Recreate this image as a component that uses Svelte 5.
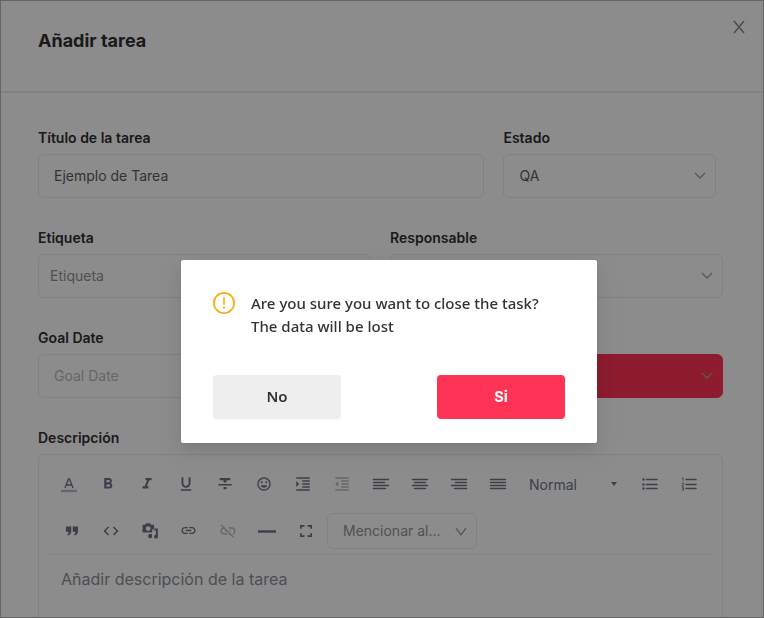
<script>
  const firstRow = [
    { name: 'Color de texto', kind: 'color' },
    { name: 'Negrita', d: 'M15.6 10.79c.97-.67 1.65-1.77 1.65-2.79 0-2.26-1.75-4-4-4H7v14h7.04c2.09 0 3.71-1.7 3.71-3.79 0-1.52-.86-2.82-2.15-3.42zM10 6.5h3c.83 0 1.5.67 1.5 1.5s-.67 1.5-1.5 1.5h-3v-3zm3.5 9H10v-3h3.5c.83 0 1.5.67 1.5 1.5s-.67 1.5-1.5 1.5z' },
    { name: 'Cursiva', d: 'M10 4v3h2.21l-3.42 8H6v3h8v-3h-2.21l3.42-8H18V4z' },
    { name: 'Subrayado', d: 'M12 17c3.31 0 6-2.69 6-6V3h-2.5v8c0 1.93-1.57 3.5-3.5 3.5S8.5 12.93 8.5 11V3H6v8c0 3.31 2.69 6 6 6zm-7 2v2h14v-2H5z' },
    { name: 'Tachado', d: 'M10 19h4v-3h-4v3zM5 4v3h5v3h4V7h5V4H5zM3 14h18v-2H3v2z' },
    { name: 'Emoji', size: 16, d: 'M11.99 2C6.47 2 2 6.48 2 12s4.47 10 9.99 10C17.52 22 22 17.52 22 12S17.52 2 11.99 2zM12 20c-4.42 0-8-3.58-8-8s3.58-8 8-8 8 3.58 8 8-3.58 8-8 8zm3.5-9c.83 0 1.5-.67 1.5-1.5S16.33 8 15.5 8 14 8.67 14 9.5s.67 1.5 1.5 1.5zm-7 0c.83 0 1.5-.67 1.5-1.5S9.33 8 8.5 8 7 8.67 7 9.5 7.67 11 8.5 11zm3.5 6.5c2.33 0 4.31-1.46 5.11-3.5H6.89c.8 2.04 2.78 3.5 5.11 3.5z' },
    { name: 'Aumentar sangría', d: 'M3 21h18v-2H3v2zM3 8v8l4-4-4-4zm8 9h10v-2H11v2zM3 3v2h18V3H3zm8 6h10V7H11v2zm0 4h10v-2H11v2z' },
    { name: 'Reducir sangría', off: true, d: 'M11 17h10v-2H11v2zm-8-5l4 4V8l-4 4zm0 9h18v-2H3v2zM3 3v2h18V3H3zm8 6h10V7H11v2zm0 4h10v-2H11v2z' },
    { name: 'Alinear a la izquierda', lines: 'M1.5 4.5h15M1.5 7.5h11M1.5 10.5h15M1.5 13.5h12' },
    { name: 'Centrar', lines: 'M1.5 4.5h15M3.5 7.5h11M1.5 10.5h15M3.5 13.5h11' },
    { name: 'Alinear a la derecha', lines: 'M1.5 4.5h15M5.5 7.5h11M1.5 10.5h15M4.5 13.5h12' },
    { name: 'Justificar', lines: 'M1.5 4.5h15M1.5 7.5h15M1.5 10.5h15M1.5 13.5h15' }
  ];
  const lists = [
    { name: 'Lista con viñetas', lines: 'M5.5 4.5h10.500M5.5 9.5h10.500M5.5 13.5h10.500', bullets: [4.5, 9.5, 13.5] },
    { name: 'Lista numerada', lines: 'M6 4.5h10M6 9.5h10M6 13.5h10', marks: 'M2 3.2l1-.4v3M1.8 8h1.6v1.4l-1.6 1.4h1.8M1.8 12.2h1.6v3H1.8M2.4 13.7h1' }
  ];
  const secondRow = [
    { name: 'Cita', d: 'M4 6h7v6c0 3-1.300 5.200-4 5.700H5.300c1.500-1.200 2-2.700 2-4.700H4zM13 6h7v6c0 3-1.300 5.200-4 5.700h-1.700c1.500-1.200 2-2.700 2-4.700H13z' },
    { name: 'Código', d: 'M9.4 16.6L4.8 12l4.6-4.6L8 6l-6 6 6 6 1.4-1.4zm5.2 0l4.6-4.6-4.6-4.6L16 6l6 6-6 6-1.4-1.4z' },
    { name: 'Multimedia', d: 'M5.500 3.500L7 1.500h5l1.500 2H16c1 0 1.500.6 1.500 1.500v4.500H15V14H3.500C2.600 14 2 13.400 2 12.500V5c0-.9.6-1.500 1.500-1.500zM9.500 5.500a3.200 3.200 0 1 0 0 6.400 3.200 3.200 0 0 0 0-6.400zM18 8.500h4.500v11a2.600 2.600 0 1 1-2.600-2.600V11.500H18zM9.500 18.600a2.600 2.600 0 0 1 2.600-2.600h2.600v3.500a2.600 2.600 0 0 1-5.200-.9z' },
    { name: 'Enlace', size: 17, d: 'M3.9 12c0-1.71 1.39-3.1 3.1-3.1h4V7H7c-2.760 0-5 2.240-5 5s2.240 5 5 5h4v-1.900H7c-1.710 0-3.100-1.390-3.100-3.100zM8 13h8v-2H8v2zm9-6h-4v1.900h4c1.710 0 3.100 1.390 3.100 3.100s-1.390 3.100-3.100 3.100h-4V17h4c2.760 0 5-2.240 5-5s-2.240-5-5-5z' },
    { name: 'Quitar enlace', off: true, d: 'M17 7h-4v1.900h4c1.710 0 3.100 1.390 3.100 3.100 0 1.430-.98 2.630-2.310 2.980l1.460 1.460C20.880 15.610 22 13.950 22 12c0-2.760-2.240-5-5-5zm-1 4h-2.190l2 2H16v-2zM2 4.270l3.110 3.110C3.290 8.120 2 9.910 2 12c0 2.760 2.240 5 5 5h4v-1.900H7c-1.710 0-3.100-1.390-3.100-3.100 0-1.590 1.210-2.900 2.760-3.070L8.730 11H8v2h2.730L13 15.270V17h1.730l4.010 4L20 19.740 3.270 3 2 4.270z' },
    { name: 'Línea horizontal', kind: 'rule' },
    { name: 'Pantalla completa', d: 'M6.300 15H4v5h6v-2.300H6.300zM4 9h2.300V6.300H10V4H4zm13.700 8.700H14V20h6v-5h-2.300zM14 4v2.300h3.700V9H20V4z' }
  ];
</script>

{#snippet chevron()}
  <svg class="chevron" width="12" height="8" viewBox="0 0 12 8" aria-hidden="true"><path d="M1 1l5 5 5-5" /></svg>
{/snippet}

{#snippet tool(t)}
  <button type="button" class="tool" class:off={t.off} disabled={t.off} aria-label={t.name}>
    {#if t.d}
      <svg width={t.size ?? 18} height={t.size ?? 18} viewBox="0 0 24 24"><path fill="currentColor" fill-rule="evenodd" d={t.d} /></svg>
    {:else if t.kind === 'color'}
      <svg width="18" height="18" viewBox="0 0 18 18">
        <path d="M5 13L8.500 4h1L13 13M6.300 10h5.400" fill="none" stroke="currentColor" stroke-width="1.300" />
        <path d="M1 16h16" stroke="#b8babe" stroke-width="2.400" />
      </svg>
    {:else if t.kind === 'rule'}
      <svg width="18" height="18" viewBox="0 0 18 18"><path d="M0 9.500h18" stroke="currentColor" stroke-width="2.400" /></svg>
    {:else}
      <svg width="18" height="18" viewBox="0 0 18 18">
        <path d={t.lines} fill="none" stroke="currentColor" stroke-width="1.500" stroke-linecap="round" />
        {#each t.bullets ?? [] as y}<circle cx="2.500" cy={y} r="1.200" fill="currentColor" />{/each}
        {#if t.marks}<path d={t.marks} fill="none" stroke="currentColor" stroke-width=".9" />{/if}
      </svg>
    {/if}
  </button>
{/snippet}

<div class="drawer">
  <header>
    <h1>Añadir tarea</h1>
    <button type="button" class="close" aria-label="Cerrar">
      <svg width="12" height="14" viewBox="0 0 12 14"><path d="M1 1l10 12M11 1L1 13" /></svg>
    </button>
  </header>

  <form>
    <div class="row top">
      <div class="field wide">
        <label for="titulo">Título de la tarea</label>
        <input id="titulo" class="control" value="Ejemplo de Tarea" />
      </div>
      <div class="field">
        <label for="estado">Estado</label>
        <div class="pick">
          <select id="estado" class="control"><option>QA</option></select>
          {@render chevron()}
        </div>
      </div>
    </div>
    <div class="row">
      <div class="field">
        <label for="etiqueta">Etiqueta</label>
        <input id="etiqueta" class="control tag" placeholder="Etiqueta" />
      </div>
      <div class="field">
        <label for="responsable">Responsable</label>
        <div class="pick">
          <select id="responsable" class="control"><option></option></select>
          {@render chevron()}
        </div>
      </div>
    </div>
    <div class="row">
      <div class="field">
        <label for="fecha">Goal Date</label>
        <input id="fecha" class="control" placeholder="Goal Date" />
      </div>
      <div class="field">
        <label for="prioridad">&nbsp;</label>
        <div class="pick">
          <select id="prioridad" class="control red" aria-label="Prioridad"><option></option></select>
          {@render chevron()}
        </div>
      </div>
    </div>

    <div class="field">
      <label for="descripcion">Descripción</label>
      <div class="editor">
        <div class="toolbar">
          <div class="tools">
            {#each firstRow as t}{@render tool(t)}{/each}
            <button type="button" class="format">
              Normal
              <svg width="6" height="4" viewBox="0 0 6 4"><path d="M0 0h6L3 4z" fill="currentColor" /></svg>
            </button>
            {#each lists as t}{@render tool(t)}{/each}
          </div>
          <div class="tools second">
            {#each secondRow as t}{@render tool(t)}{/each}
            <div class="pick mention">
              <select class="control" aria-label="Mencionar"><option>Mencionar al...</option></select>
              <svg class="chevron" width="12" height="9" viewBox="0 0 12 9" aria-hidden="true"><path d="M1 1l5 7 5-7" /></svg>
            </div>
          </div>
        </div>
        <textarea id="descripcion" placeholder="Añadir descripción de la tarea"></textarea>
      </div>
    </div>
  </form>
</div>

<div class="mask">
  <div class="dialog" role="alertdialog" aria-modal="true" aria-labelledby="question">
    <div class="message">
      <svg width="22" height="22" viewBox="0 0 22 22" aria-hidden="true">
        <circle cx="11" cy="11" r="10.100" fill="none" stroke="#faad14" stroke-width="1.800" />
        <path d="M11 5.300v7.500" stroke="#faad14" stroke-width="1.600" />
        <circle cx="11" cy="15.700" r="1.100" fill="#faad14" />
      </svg>
      <p id="question">Are you sure you want to close the task?<br />The data will be lost</p>
    </div>
    <div class="actions">
      <button type="button" class="no">No</button>
      <button type="button" class="yes">Si</button>
    </div>
  </div>
</div>

<style>
  :global(body) {
    margin: 0;
    overflow: hidden;
    background: #fff;
  }
  * {
    box-sizing: border-box;
  }
  .drawer {
    height: 100vh;
    overflow: hidden;
    background: #fff;
    color: #303030;
    font-family: Inter, 'Liberation Sans', sans-serif;
  }
  button,
  input,
  select,
  textarea {
    font-family: inherit;
    color: inherit;
    margin: 0;
  }
  button {
    padding: 0;
    border: 0;
    background: none;
    cursor: pointer;
  }
  header {
    display: flex;
    justify-content: space-between;
    align-items: flex-start;
    height: 93px;
    padding: 18px 19px 0 38px;
    border-bottom: 2px solid #ebebeb;
  }
  h1 {
    margin: 11px 0 0;
    font-size: 18px;
    line-height: 24px;
    font-weight: 700;
  }
  .close {
    display: flex;
    padding: 2px 0;
  }
  .close path {
    fill: none;
    stroke: #8c8c8c;
    stroke-width: 1.5;
  }
  form {
    display: flex;
    flex-direction: column;
    gap: 30px;
    padding: 35px 41px 0 38px;
  }
  .row {
    display: flex;
    gap: 19px;
  }
  .top {
    padding-right: 7px;
  }
  .field {
    flex: 1;
    min-width: 0;
  }
  .field.wide {
    flex: 2.1;
  }
  label {
    display: block;
    height: 20px;
    margin-bottom: 6px;
    font-size: 14px;
    line-height: 20px;
    font-weight: 600;
  }
  .control {
    display: block;
    width: 100%;
    height: 44px;
    padding: 0 15px 2px;
    border: 1px solid #ebebeb;
    border-radius: 6px;
    background: transparent;
    color: #5c5c5c;
    font-size: 14px;
    appearance: none;
    outline: 0;
  }
  .tag {
    padding: 0 11px 2px;
  }
  .control::placeholder {
    color: #bababa;
    opacity: 1;
  }
  .tag::placeholder {
    color: #949494;
  }
  .red {
    background: #ff3355;
    border-color: #ff3355;
  }
  .pick {
    position: relative;
  }
  .chevron {
    position: absolute;
    right: 10px;
    top: 18px;
    pointer-events: none;
  }
  .chevron path {
    fill: none;
    stroke: #a0a0a0;
    stroke-width: 1.3;
  }
  .editor {
    height: 240px;
    padding: 0 8px;
    border: 1px solid #ebebeb;
    border-radius: 6px;
  }
  .toolbar {
    padding: 10px 2px 0;
    border-bottom: 1px solid #f0f0f0;
    color: #6d7484;
  }
  .tools {
    display: flex;
    align-items: center;
    height: 38px;
  }
  .second {
    height: 51px;
    padding: 4px 0 0 3px;
  }
  .tool {
    display: flex;
    flex: none;
    align-items: center;
    justify-content: center;
    width: 39px;
    height: 36px;
  }
  .off {
    color: #bbbdc1;
  }
  .format {
    display: flex;
    align-items: center;
    justify-content: space-between;
    width: 113px;
    padding: 0 13px 0 12px;
    font-size: 14px;
  }
  .mention {
    width: 150px;
    margin-left: 2px;
  }
  .mention .control {
    height: 36px;
    padding-bottom: 0;
    color: #949494;
  }
  .mention .chevron {
    top: 14px;
  }
  textarea {
    display: block;
    width: 100%;
    padding: 14px;
    border: 0;
    outline: 0;
    resize: none;
    background: transparent;
    font-size: 16px;
    line-height: 21px;
  }
  textarea::placeholder {
    color: #8b9098;
    opacity: 1;
  }
  .mask {
    position: fixed;
    inset: 0;
    display: flex;
    justify-content: center;
    align-items: flex-start;
    padding: 259px 0 0 14px;
    border: 1px solid #666;
    background: rgba(0, 0, 0, 0.45);
  }
  .dialog {
    width: 416px;
    padding: 32px 32px 24px;
    border-radius: 2px;
    background: #fff;
    color: #333;
    font-family: 'Noto Sans', 'Open Sans', sans-serif;
    box-shadow:
      0 3px 6px -4px rgba(0, 0, 0, 0.12),
      0 6px 16px rgba(0, 0, 0, 0.08),
      0 9px 28px 8px rgba(0, 0, 0, 0.05);
  }
  .message {
    display: flex;
    gap: 16px;
  }
  .message svg {
    flex: none;
  }
  p {
    margin: 0;
    font-size: 15px;
    line-height: 23px;
    font-weight: 500;
    white-space: nowrap;
  }
  .actions {
    display: flex;
    justify-content: space-between;
    margin-top: 37px;
  }
  .actions button {
    width: 128px;
    height: 44px;
    padding-bottom: 2px;
    border-radius: 4px;
    font-size: 15px;
    font-weight: 600;
  }
  .actions .no {
    background: #eee;
    color: #333;
    box-shadow: 0 2px 0 rgba(0, 0, 0, 0.02);
  }
  .actions .yes {
    background: #ff3355;
    color: #fff;
    font-family: Inter, sans-serif;
    font-weight: 700;
  }
</style>
